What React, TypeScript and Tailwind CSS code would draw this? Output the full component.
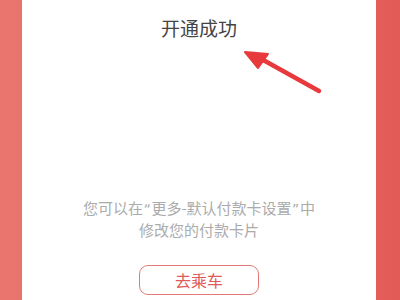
import React from "react";

export default function App() {
  return (
    <div
      className="w-[400px] h-[300px] overflow-hidden flex bg-gradient-to-r from-[#e9756e] to-[#e35b56]"
      style={{ fontFamily: '"Noto Sans CJK SC", "Noto Sans", sans-serif' }}
    >
      <div className="ml-[22px] w-[354px] h-full bg-white relative flex flex-col items-center">
        <div className="pt-[14px] text-[19px] leading-[28px] text-[#444]">开通成功</div>
        <svg
          className="absolute left-0 top-0"
          width="354"
          height="120"
          viewBox="0 0 354 120"
        >
          <line x1="297" y1="91" x2="234" y2="56" stroke="#e8393c" strokeWidth="4.5" strokeLinecap="round" />
          <polygon points="223,52 246,54 236,68" fill="#e8393c" stroke="#e8393c" strokeWidth="2" strokeLinejoin="round" />
        </svg>
        <div className="mt-[155px] text-[15px] leading-[22px] text-[#ababab] text-center">
          您可以在<span className="font-['Noto_Sans'] px-[1.5px]">“</span>更多-默认付款卡设置<span className="font-['Noto_Sans'] px-[1.5px]">”</span>中
          <br />
          修改您的付款卡片
        </div>
        <button className="mt-[24px] w-[120px] h-[30px] rounded-[9px] border border-[#e27a7a] text-[16px] text-[#e05a5a] flex items-center justify-center">
          去乘车
        </button>
      </div>
    </div>
  );
}
